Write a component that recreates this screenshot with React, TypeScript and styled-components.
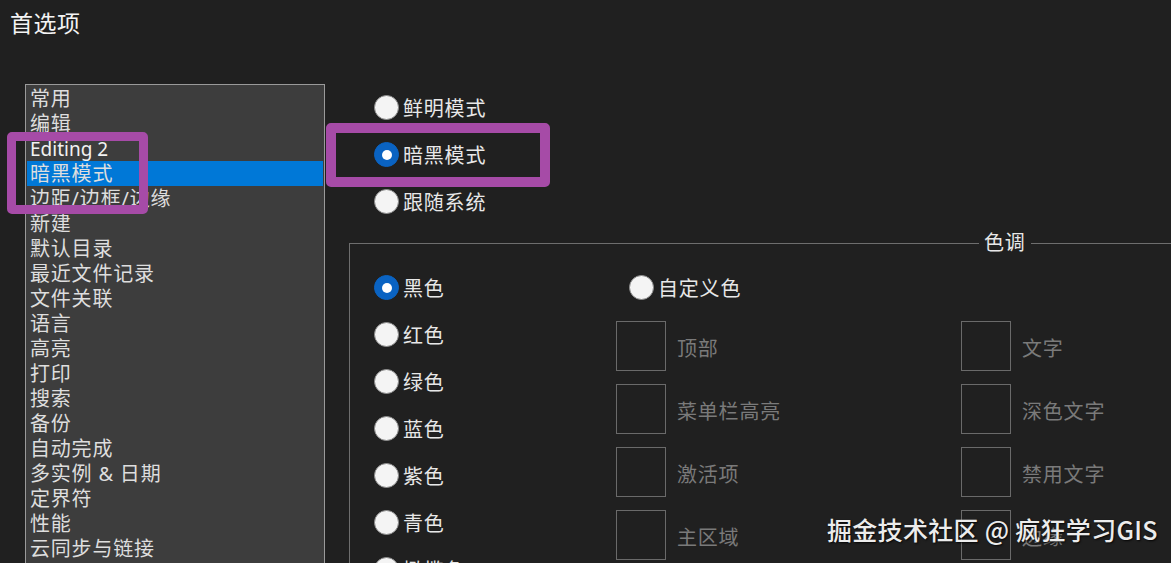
import styled, { createGlobalStyle } from "styled-components";

const GlobalStyle = createGlobalStyle`
  html, body {
    margin: 0;
    padding: 0;
    background: #202020;
    overflow: hidden;
  }
  body {
    font-family: "Noto Sans", "Noto Sans CJK SC", sans-serif;
    color: #e6e6e6;
  }
`;

const Page = styled.div`
  position: relative;
  width: 1171px;
  height: 563px;
  overflow: hidden;
`;

const Title = styled.div`
  padding: 8px 10px 0;
  font-size: 23px;
  line-height: 30px;
  letter-spacing: 0.5px;
  color: #f4f4f4;
`;

const Body = styled.div`
  display: flex;
  align-items: flex-start;
  margin-top: 46px;
  padding-left: 25px;
`;

const CategoryList = styled.div`
  box-sizing: border-box;
  width: 300px;
  height: 520px;
  flex-shrink: 0;
  padding: 1px;
  background: #3d3d3d;
  border: 1px solid #9a9a9a;
`;

const CategoryItem = styled.div<{ $active?: boolean; $latin?: boolean }>`
  height: 25px;
  padding-left: 3px;
  font-size: ${(p) => (p.$latin ? "19px" : "20px")};
  line-height: 26px;
  letter-spacing: ${(p) => (p.$latin ? "0" : "0.8px")};
  white-space: nowrap;
  color: ${(p) => (p.$latin ? "#f2f2f2" : "#dedede")};
  background: ${(p) => (p.$active ? "#0078d7" : "transparent")};
`;

const RightPane = styled.div`
  display: flex;
  flex-direction: column;
  margin-left: 24px;
`;

const ModeGroup = styled.div`
  display: flex;
  flex-direction: column;
  padding-left: 25px;
`;

const RadioRow = styled.div<{ $indent?: number }>`
  display: flex;
  align-items: center;
  gap: 4px;
  height: 47px;
  padding-left: ${(p) => p.$indent ?? 0}px;
  font-size: 20px;
  letter-spacing: 0.8px;
  color: #e8e8e8;
  white-space: nowrap;
`;

const RadioDot = styled.span<{ $checked?: boolean }>`
  box-sizing: border-box;
  display: flex;
  align-items: center;
  justify-content: center;
  width: 25px;
  height: 25px;
  border-radius: 50%;
  flex-shrink: 0;
  background: ${(p) => (p.$checked ? "#0a63c2" : "#f4f4f4")};
  border: 1px solid ${(p) => (p.$checked ? "#0a63c2" : "#8a8a8a")};

  &::after {
    content: "";
    display: ${(p) => (p.$checked ? "block" : "none")};
    width: 10px;
    height: 10px;
    border-radius: 50%;
    background: #ffffff;
  }
`;

const ToneBox = styled.fieldset`
  box-sizing: border-box;
  width: 900px;
  height: 400px;
  margin: 6px 0 0;
  padding: 9px 0 0 24px;
  border: 1px solid #6e6e6e;
  display: flex;
`;

const ToneLegend = styled.legend`
  margin-left: 605px;
  padding: 0 5px;
  font-size: 20px;
  line-height: 24px;
  letter-spacing: 0.8px;
  color: #e8e8e8;
`;

const ToneColumn = styled.div`
  display: flex;
  flex-direction: column;
  width: 242px;
  flex-shrink: 0;
`;

const CustomColumn = styled.div`
  display: flex;
  flex-direction: column;
`;

const SwatchGrid = styled.div`
  display: grid;
  grid-template-columns: 345px 200px;
  row-gap: 13px;
  margin-top: 10px;
`;

const SwatchItem = styled.div`
  display: flex;
  align-items: center;
  gap: 11px;
`;

const Swatch = styled.span`
  box-sizing: border-box;
  width: 50px;
  height: 50px;
  border: 1px solid #6a6a6a;
  flex-shrink: 0;
`;

const SwatchLabel = styled.span`
  font-size: 20px;
  letter-spacing: 0.8px;
  padding-top: 2px;
  color: #7a7a7a;
  white-space: nowrap;
`;

const Annotation = styled.div<{ $x: number; $y: number; $w: number; $h: number; $t: number }>`
  position: absolute;
  box-sizing: border-box;
  left: ${(p) => p.$x}px;
  top: ${(p) => p.$y}px;
  width: ${(p) => p.$w}px;
  height: ${(p) => p.$h}px;
  border: ${(p) => p.$t}px solid #a64ba7;
  border-radius: 5px;
  pointer-events: none;
`;

const Watermark = styled.div`
  position: absolute;
  left: 827px;
  top: 512px;
  font-family: "Noto Sans CJK SC", "Noto Sans", sans-serif;
  font-size: 25px;
  font-weight: 500;
  line-height: 34px;
  letter-spacing: 0.3px;
  color: #ececec;
  text-shadow: 1px 1px 2px rgba(0, 0, 0, 0.85);
  white-space: nowrap;
`;

const categories = [
  "常用",
  "编辑",
  "Editing 2",
  "暗黑模式",
  "边距/边框/边缘",
  "新建",
  "默认目录",
  "最近文件记录",
  "文件关联",
  "语言",
  "高亮",
  "打印",
  "搜索",
  "备份",
  "自动完成",
  "多实例 & 日期",
  "定界符",
  "性能",
  "云同步与链接",
  "搜索引擎",
];

const modes = [
  { label: "鲜明模式", checked: false },
  { label: "暗黑模式", checked: true },
  { label: "跟随系统", checked: false },
];

const tones = ["黑色", "红色", "绿色", "蓝色", "紫色", "青色", "橄榄色"];

const swatches = [
  "顶部",
  "文字",
  "菜单栏高亮",
  "深色文字",
  "激活项",
  "禁用文字",
  "主区域",
  "边缘",
];

export default function App() {
  return (
    <Page>
      <GlobalStyle />
      <Title>首选项</Title>

      <Body>
        <CategoryList>
          {categories.map((c) => (
            <CategoryItem key={c} $active={c === "暗黑模式"} $latin={c === "Editing 2"}>
              {c}
            </CategoryItem>
          ))}
        </CategoryList>

        <RightPane>
          <ModeGroup>
            {modes.map((m) => (
              <RadioRow key={m.label}>
                <RadioDot $checked={m.checked} />
                {m.label}
              </RadioRow>
            ))}
          </ModeGroup>

          <ToneBox>
            <ToneLegend>色调</ToneLegend>
            <ToneColumn>
              {tones.map((t, i) => (
                <RadioRow key={t}>
                  <RadioDot $checked={i === 0} />
                  {t}
                </RadioRow>
              ))}
            </ToneColumn>

            <CustomColumn>
              <RadioRow $indent={13}>
                <RadioDot />
                自定义色
              </RadioRow>
              <SwatchGrid>
                {swatches.map((s) => (
                  <SwatchItem key={s}>
                    <Swatch />
                    <SwatchLabel>{s}</SwatchLabel>
                  </SwatchItem>
                ))}
              </SwatchGrid>
            </CustomColumn>
          </ToneBox>
        </RightPane>
      </Body>

      <Annotation $x={7} $y={132} $w={141} $h={82} $t={9} />
      <Annotation $x={326} $y={123} $w={224} $h={64} $t={10} />

      <Watermark>掘金技术社区 @ 疯狂学习GIS</Watermark>
    </Page>
  );
}
